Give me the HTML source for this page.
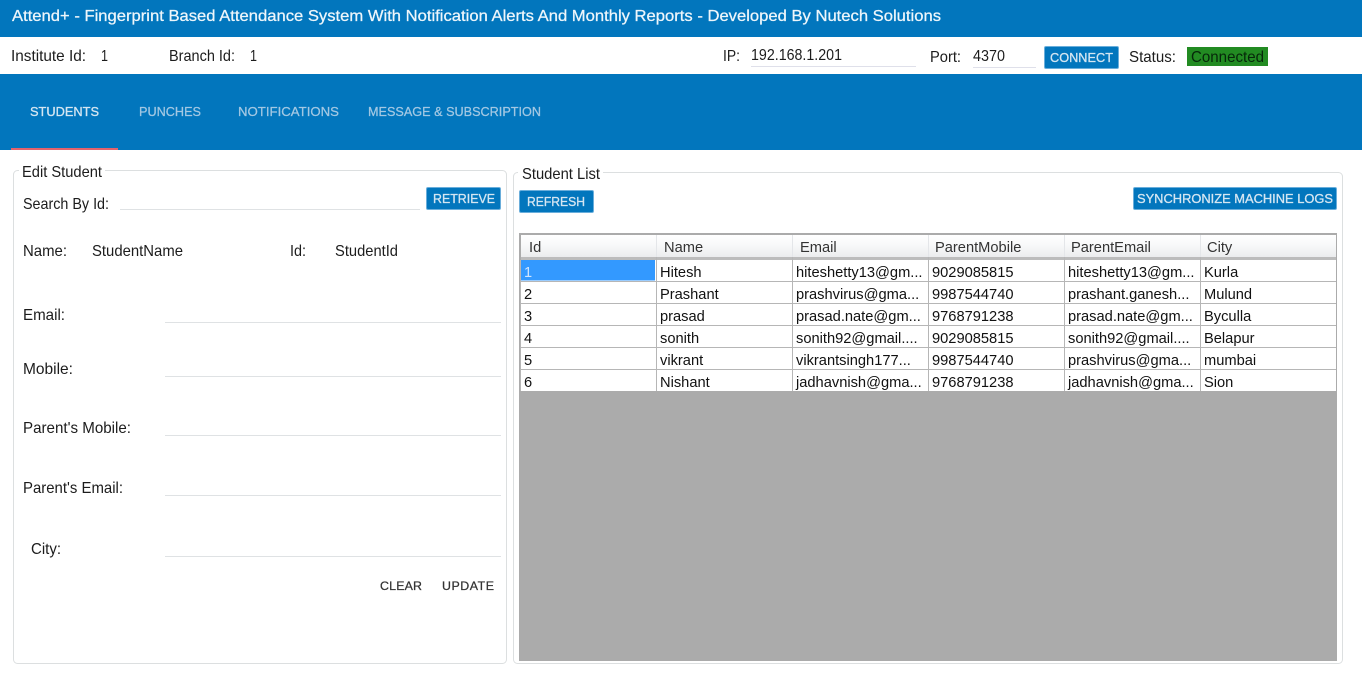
<!DOCTYPE html>
<html lang="en"><head><meta charset="utf-8"><title>Attend+</title>
<style>
html,body{margin:0;padding:0;background:#fff;width:1362px;height:690px;overflow:hidden}
svg{display:block;position:absolute;left:0;top:0}
text{font-family:"Liberation Sans",Arial,sans-serif;font-size:15.8px;fill:#1c1c1c;white-space:pre}
.b{font-size:13px;fill:#d5e6f2;stroke:#d5e6f2;stroke-width:.3px}
.t{font-size:13px;fill:#a3c8e3;stroke:#a3c8e3;stroke-width:.25px}
.g{font-size:14.67px;fill:#111}
.h{font-size:14.67px;fill:#333}
.f{font-size:12.4px;fill:#333;stroke:#333;stroke-width:.25px}
</style></head><body>
<svg width="1362" height="690" viewBox="0 0 1362 690" xmlns="http://www.w3.org/2000/svg">
<defs>
<linearGradient id="hd" x1="0" y1="0" x2="0" y2="1"><stop offset="0" stop-color="#ffffff"/><stop offset=".5" stop-color="#f7f8f9"/><stop offset="1" stop-color="#ebecee"/></linearGradient>
<clipPath id="gc"><rect x="519" y="233" width="818" height="158"/></clipPath>
</defs>
<rect x="0" y="0" width="1362" height="37" fill="#0276bd"/>
<text x="12" y="21" textLength="929" lengthAdjust="spacingAndGlyphs" style="font-size:15.8px;fill:#eef6fb;stroke:#eef6fb;stroke-width:.25px">Attend+ - Fingerprint Based Attendance System With Notification Alerts And Monthly Reports - Developed By Nutech Solutions</text>

<text x="11" y="61" textLength="75" lengthAdjust="spacingAndGlyphs">Institute Id:</text>
<text x="101" y="61" textLength="7" lengthAdjust="spacingAndGlyphs">1</text>
<text x="169" y="61" textLength="66" lengthAdjust="spacingAndGlyphs">Branch Id:</text>
<text x="250" y="61" textLength="7" lengthAdjust="spacingAndGlyphs">1</text>
<text x="723" y="61" textLength="17" lengthAdjust="spacingAndGlyphs">IP:</text>
<text x="751" y="60" textLength="91" lengthAdjust="spacingAndGlyphs">192.168.1.201</text>
<rect x="751" y="66" width="165" height="1" fill="#dfe0ea"/>
<text x="930" y="62" textLength="31" lengthAdjust="spacingAndGlyphs">Port:</text>
<text x="973" y="61" textLength="32" lengthAdjust="spacingAndGlyphs">4370</text>
<rect x="973" y="67" width="63" height="1" fill="#dfe0ea"/>
<rect x="1044.5" y="46.5" width="74" height="22" rx="1.5" fill="#0276bd" stroke="#6aaedb"/>
<text class="b" x="1050" y="62" textLength="63" lengthAdjust="spacingAndGlyphs">CONNECT</text>
<text x="1129" y="62" textLength="47" lengthAdjust="spacingAndGlyphs">Status:</text>
<rect x="1187" y="47" width="81" height="19" fill="#228b22"/>
<text x="1191" y="62" textLength="73" lengthAdjust="spacingAndGlyphs" style="fill:#06280a">Connected</text>

<rect x="0" y="74" width="1362" height="76" fill="#0276bd"/>
<rect x="11" y="148" width="107" height="2" fill="#e4636c"/>
<text class="b" x="30" y="116" textLength="69" lengthAdjust="spacingAndGlyphs">STUDENTS</text>
<text class="t" x="139" y="116" textLength="62" lengthAdjust="spacingAndGlyphs">PUNCHES</text>
<text class="t" x="238" y="116" textLength="101" lengthAdjust="spacingAndGlyphs">NOTIFICATIONS</text>
<text class="t" x="368" y="116" textLength="173" lengthAdjust="spacingAndGlyphs">MESSAGE &amp; SUBSCRIPTION</text>

<rect x="13.5" y="170.5" width="493" height="493" rx="4" fill="#fff" stroke="#dcdfe0"/>
<rect x="19" y="168" width="86" height="5" fill="#fff"/>
<text x="22" y="177" textLength="80" lengthAdjust="spacingAndGlyphs">Edit Student</text>
<text x="23" y="209" textLength="86" lengthAdjust="spacingAndGlyphs">Search By Id:</text>
<rect x="120" y="209" width="300" height="1" fill="#dfe2e4"/>
<rect x="426.5" y="187.5" width="74" height="22" rx="1.5" fill="#0276bd" stroke="#6aaedb"/>
<text class="b" x="433" y="203" textLength="62" lengthAdjust="spacingAndGlyphs">RETRIEVE</text>

<text x="23" y="256" textLength="44" lengthAdjust="spacingAndGlyphs">Name:</text>
<text x="92" y="256" textLength="91" lengthAdjust="spacingAndGlyphs">StudentName</text>
<text x="290" y="256" textLength="16" lengthAdjust="spacingAndGlyphs">Id:</text>
<text x="335" y="256" textLength="63" lengthAdjust="spacingAndGlyphs">StudentId</text>

<text x="23" y="320" textLength="42" lengthAdjust="spacingAndGlyphs">Email:</text>
<rect x="165" y="322" width="336" height="1" fill="#dfe2e4"/>
<text x="23" y="374" textLength="50" lengthAdjust="spacingAndGlyphs">Mobile:</text>
<rect x="165" y="376" width="336" height="1" fill="#dfe2e4"/>
<text x="23" y="433" textLength="108" lengthAdjust="spacingAndGlyphs">Parent's Mobile:</text>
<rect x="165" y="435" width="336" height="1" fill="#dfe2e4"/>
<text x="23" y="493" textLength="100" lengthAdjust="spacingAndGlyphs">Parent's Email:</text>
<rect x="165" y="495" width="336" height="1" fill="#dfe2e4"/>
<text x="31" y="554" textLength="30" lengthAdjust="spacingAndGlyphs">City:</text>
<rect x="165" y="556" width="336" height="1" fill="#dfe2e4"/>
<text class="f" x="380" y="590" textLength="42" lengthAdjust="spacing">CLEAR</text>
<text class="f" x="442" y="590" textLength="52" lengthAdjust="spacing">UPDATE</text>

<rect x="513.5" y="172.5" width="829" height="491" rx="4" fill="#fff" stroke="#dcdfe0"/>
<rect x="518" y="170" width="85" height="5" fill="#fff"/>
<text x="522" y="179" textLength="78" lengthAdjust="spacingAndGlyphs">Student List</text>
<rect x="519.5" y="190.5" width="74" height="22" rx="1.5" fill="#0276bd" stroke="#6aaedb"/>
<text class="b" x="527" y="206" textLength="58" lengthAdjust="spacingAndGlyphs">REFRESH</text>
<rect x="1133.5" y="187.5" width="203" height="22" rx="1.5" fill="#0276bd" stroke="#6aaedb"/>
<text class="b" x="1137" y="203" textLength="196" lengthAdjust="spacingAndGlyphs">SYNCHRONIZE MACHINE LOGS</text>

<rect x="519" y="233" width="818" height="428" fill="#ababab"/>
<rect x="521" y="235" width="815" height="156" fill="#fff"/>
<rect x="521" y="235" width="815" height="22" fill="url(#hd)"/>
<rect x="521" y="257" width="815" height="3" fill="#bcbcbc"/>
<g fill="#e4e6e9">
<rect x="656" y="235" width="1" height="22"/><rect x="792" y="235" width="1" height="22"/><rect x="928" y="235" width="1" height="22"/><rect x="1064" y="235" width="1" height="22"/><rect x="1200" y="235" width="1" height="22"/>
</g>
<g fill="#b6b6b6">
<rect x="520" y="281" width="816" height="1"/><rect x="520" y="303" width="816" height="1"/><rect x="520" y="325" width="816" height="1"/><rect x="520" y="347" width="816" height="1"/><rect x="520" y="369" width="816" height="1"/>
<rect x="520" y="260" width="1" height="131"/><rect x="656" y="257" width="1" height="134"/><rect x="792" y="257" width="1" height="134"/><rect x="928" y="257" width="1" height="134"/><rect x="1064" y="257" width="1" height="134"/><rect x="1200" y="257" width="1" height="134"/>
</g>
<rect x="521" y="260" width="134" height="20.5" fill="#3399ff"/>
<text class="h" x="529" y="252">Id</text>
<text class="h" x="664" y="252">Name</text>
<text class="h" x="800" y="252">Email</text>
<text class="h" x="935" y="252">ParentMobile</text>
<text class="h" x="1071" y="252">ParentEmail</text>
<text class="h" x="1207" y="252">City</text>
<g clip-path="url(#gc)">
<text class="g" x="524" y="277" style="fill:#cfe5ff">1</text><text class="g" x="660" y="277">Hitesh</text><text class="g" x="796" y="277">hiteshetty13@gm...</text><text class="g" x="932" y="277">9029085815</text><text class="g" x="1068" y="277">hiteshetty13@gm...</text><text class="g" x="1204" y="277">Kurla</text>
<text class="g" x="524" y="299">2</text><text class="g" x="660" y="299">Prashant</text><text class="g" x="796" y="299">prashvirus@gma...</text><text class="g" x="932" y="299">9987544740</text><text class="g" x="1068" y="299">prashant.ganesh...</text><text class="g" x="1204" y="299">Mulund</text>
<text class="g" x="524" y="321">3</text><text class="g" x="660" y="321">prasad</text><text class="g" x="796" y="321">prasad.nate@gm...</text><text class="g" x="932" y="321">9768791238</text><text class="g" x="1068" y="321">prasad.nate@gm...</text><text class="g" x="1204" y="321">Byculla</text>
<text class="g" x="524" y="343">4</text><text class="g" x="660" y="343">sonith</text><text class="g" x="796" y="343">sonith92@gmail....</text><text class="g" x="932" y="343">9029085815</text><text class="g" x="1068" y="343">sonith92@gmail....</text><text class="g" x="1204" y="343">Belapur</text>
<text class="g" x="524" y="365">5</text><text class="g" x="660" y="365">vikrant</text><text class="g" x="796" y="365">vikrantsingh177...</text><text class="g" x="932" y="365">9987544740</text><text class="g" x="1068" y="365">prashvirus@gma...</text><text class="g" x="1204" y="365">mumbai</text>
<text class="g" x="524" y="387">6</text><text class="g" x="660" y="387">Nishant</text><text class="g" x="796" y="387">jadhavnish@gma...</text><text class="g" x="932" y="387">9768791238</text><text class="g" x="1068" y="387">jadhavnish@gma...</text><text class="g" x="1204" y="387">Sion</text>
</g>
</svg>
</body></html>
